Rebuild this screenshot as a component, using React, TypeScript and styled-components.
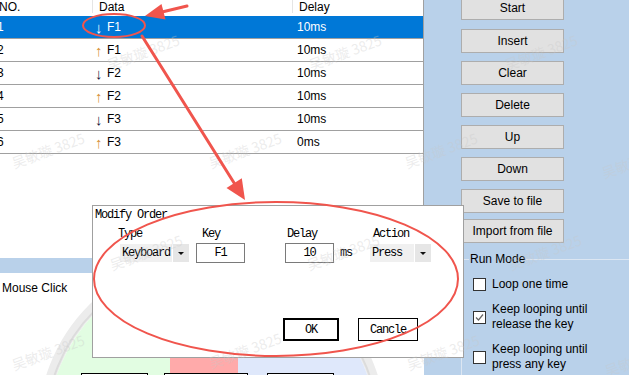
import React from "react";
import styled, { createGlobalStyle } from "styled-components";

const GlobalStyle = createGlobalStyle`
  html, body {
    margin: 0;
    padding: 0;
  }
  body {
    background: #fff;
    font-family: "Liberation Sans", Arial, sans-serif;
    font-size: 12px;
    color: #000;
  }
`;

const rows = [
  { no: 1, up: false, key: "F1", delay: "10ms" },
  { no: 2, up: true, key: "F1", delay: "10ms" },
  { no: 3, up: false, key: "F2", delay: "10ms" },
  { no: 4, up: true, key: "F2", delay: "10ms" },
  { no: 5, up: false, key: "F3", delay: "10ms" },
  { no: 6, up: true, key: "F3", delay: "0ms" },
];

const actions = ["Start", "Insert", "Clear", "Delete", "Up", "Down", "Save to file", "Import from file"];

const modes = [
  { label: "Loop one time", checked: false },
  { label: "Keep looping until release the key", checked: true },
  { label: "Keep looping until press any key", checked: false },
];

const marks = [
  [143, 52], [345, 52], [541, 52],
  [48, 150], [245, 150], [441, 150], [638, 160],
  [146, 252], [343, 252], [545, 252],
  [48, 352], [245, 350], [443, 352], [641, 358],
];

const dialogFont = `"Liberation Mono", "Courier New", monospace`;

const Page = styled.div`
  position: relative;
  width: 629px;
  height: 375px;
  overflow: hidden;
  display: flex;
`;

const LeftColumn = styled.div`
  width: 424px;
  display: flex;
  flex-direction: column;
`;

const ListPanel = styled.div`
  height: 258px;
  background: #fff;
  border-right: 1px solid #a0a0a0;
  box-sizing: border-box;
  overflow: hidden;
`;

const Table = styled.div`
  margin-left: -6px;
`;

const HeaderRow = styled.div`
  display: grid;
  grid-template-columns: 99px 200px 1fr;
  height: 16px;
  align-items: start;
`;

const HeaderCell = styled.div<{ $pad: number; $sep?: boolean }>`
  height: 13px;
  line-height: 15px;
  padding-left: ${(p) => p.$pad}px;
  border-right: ${(p) => (p.$sep ? "1px solid #e5e5e5" : "none")};
  white-space: nowrap;
`;

const BodyRow = styled.div<{ $selected?: boolean }>`
  display: grid;
  grid-template-columns: 99px 200px 1fr;
  align-items: center;
  height: 23px;
  box-sizing: border-box;
  border-bottom: 1px solid #a0a0a0;
  background: ${(p) => (p.$selected ? "#0078d7" : "#fff")};
  color: ${(p) => (p.$selected ? "#fff" : "#000")};
`;

const Cell = styled.div<{ $pad: number }>`
  padding-left: ${(p) => p.$pad}px;
  line-height: 15px;
  white-space: nowrap;
  display: flex;
  align-items: center;
`;

const Arrow = styled.span<{ $color: string }>`
  display: inline-block;
  width: 12px;
  font-size: 15px;
  line-height: 15px;
  color: ${(p) => p.$color};
`;

const BlueStrip = styled.div`
  height: 15px;
  background: #b9d1ea;
`;

const MousePanel = styled.div`
  flex: 1;
  background: #fff;
  padding-top: 8px;
  display: flex;
  flex-direction: column;
`;

const PanelTitle = styled.div`
  padding-left: 2px;
  line-height: 15px;
`;

const MouseArt = styled.svg`
  display: block;
`;

const RightColumn = styled.div`
  flex: 1;
  background: #b9d1ea;
  padding-left: 37px;
  display: flex;
  flex-direction: column;
`;

const ButtonStack = styled.div`
  margin-top: -4px;
  display: flex;
  flex-direction: column;
  gap: 8px;
`;

const SideButton = styled.div<{ $shift?: number }>`
  width: 103px;
  height: 24px;
  box-sizing: border-box;
  margin-top: ${(p) => p.$shift ?? 0}px;
  border: 1px solid #adadad;
  background: #e1e1e1;
  display: flex;
  align-items: center;
  justify-content: center;
  font-size: 12px;
  white-space: nowrap;
`;

const Group = styled.div`
  margin-top: 16px;
  width: 168px;
  flex: 1;
  border-top: 1px solid #dce6f2;
  border-left: 1px solid #dce6f2;
`;

const GroupLabel = styled.div`
  margin: -8px 0 0 7px;
  padding: 0 1px;
  width: fit-content;
  line-height: 15px;
  background: #b9d1ea;
`;

const ModeList = styled.div`
  margin-top: 10px;
  padding-left: 11px;
  display: flex;
  flex-direction: column;
  gap: 10px;
`;

const ModeRow = styled.div`
  display: flex;
  align-items: center;
  gap: 6px;
`;

const Box = styled.span`
  width: 13px;
  height: 13px;
  box-sizing: border-box;
  border: 1px solid #333;
  background: #fff;
  display: flex;
  align-items: center;
  justify-content: center;
  flex-shrink: 0;
`;

const ModeText = styled.span`
  max-width: 128px;
  line-height: 15px;
`;

const Dialog = styled.div`
  position: absolute;
  left: 92px;
  top: 205px;
  width: 372px;
  height: 153px;
  box-sizing: border-box;
  border: 1px solid #a0a0a0;
  background: #fff;
  display: flex;
  flex-direction: column;
  font-family: ${dialogFont};
  font-size: 12px;
  letter-spacing: -1.2px;
  color: #000;
  z-index: 2;
`;

const DialogTitle = styled.div`
  padding: 3px 0 0 2px;
  line-height: 12px;
`;

const FieldRow = styled.div`
  display: flex;
  margin-top: 7px;
  padding-left: 25px;
`;

const Field = styled.div<{ $w: number }>`
  width: ${(p) => p.$w}px;
  display: flex;
  flex-direction: column;
  gap: 3px;
`;

const FieldLabel = styled.div<{ $indent: number }>`
  padding-left: ${(p) => p.$indent}px;
  line-height: 12px;
`;

const Controls = styled.div<{ $indent?: number }>`
  display: flex;
  align-items: center;
  gap: 6px;
  padding-left: ${(p) => p.$indent ?? 0}px;
`;

const TextBox = styled.div`
  width: 49px;
  height: 20px;
  box-sizing: border-box;
  border: 1px solid #7a7a7a;
  display: flex;
  align-items: center;
  justify-content: center;
`;

const Select = styled.div<{ $w: number }>`
  width: ${(p) => p.$w}px;
  height: 18px;
  margin: 1px 0;
  display: flex;
  gap: 1px;
`;

const SelectText = styled.div`
  flex: 1;
  background: #f0f0f0;
  padding-left: 2px;
  display: flex;
  align-items: center;
`;

const SelectArrow = styled.div`
  width: 16px;
  background: #e6e6e6;
  display: flex;
  align-items: center;
  justify-content: center;
  &::after {
    content: "";
    border-left: 3px solid transparent;
    border-right: 3px solid transparent;
    border-top: 3px solid #111;
  }
`;

const DialogButtons = styled.div`
  display: flex;
  gap: 19px;
  margin-top: 55px;
  padding-left: 190px;
`;

const DialogButton = styled.div<{ $w: number; $default?: boolean }>`
  width: ${(p) => p.$w}px;
  height: 23px;
  box-sizing: border-box;
  border: ${(p) => (p.$default ? "2px" : "1px")} solid #000;
  display: flex;
  align-items: center;
  justify-content: center;
`;

const Watermark = styled.span<{ $x: number; $y: number }>`
  position: absolute;
  left: ${(p) => p.$x}px;
  top: ${(p) => p.$y}px;
  transform: translate(-50%, -50%) rotate(-20deg);
  font-family: "Noto Sans CJK SC", sans-serif;
  font-size: 14px;
  color: rgba(200, 200, 200, 0.35);
  white-space: nowrap;
  pointer-events: none;
  z-index: 3;
`;

const Annotations = styled.svg`
  position: absolute;
  left: 0;
  top: 0;
  pointer-events: none;
  z-index: 4;
`;

const Check = () => (
  <svg width="9" height="9" viewBox="0 0 9 9">
    <path d="M1 4.5 L3.5 7 L8 1.5" fill="none" stroke="#666" strokeWidth="1.2" />
  </svg>
);

const App: React.FC = () => {
  return (
    <>
      <GlobalStyle />
      <Page>
        <LeftColumn>
          <ListPanel>
            <Table>
              <HeaderRow>
                <HeaderCell $pad={5} $sep>NO.</HeaderCell>
                <HeaderCell $pad={6} $sep>Data</HeaderCell>
                <HeaderCell $pad={6}>Delay</HeaderCell>
              </HeaderRow>
              {rows.map((r) => (
                <BodyRow key={r.no} $selected={r.no === 1}>
                  <Cell $pad={3}>{r.no}</Cell>
                  <Cell $pad={2}>
                    <Arrow $color={r.no === 1 ? "#fff" : r.up ? "#d8923a" : "#1c1c3a"}>
                      {r.up ? "↑" : "↓"}
                    </Arrow>
                    {r.key}
                  </Cell>
                  <Cell $pad={4}>{r.delay}</Cell>
                </BodyRow>
              ))}
            </Table>
          </ListPanel>
          <BlueStrip />
          <MousePanel>
            <PanelTitle>Mouse Click</PanelTitle>
            <MouseArt width="424" height="79" viewBox="0 296 424 79">
              <defs>
                <clipPath id="inner">
                  <circle cx="212" cy="428" r="164" />
                </clipPath>
              </defs>
              <circle cx="212" cy="428" r="169" fill="none" stroke="#ececec" strokeWidth="10" />
              <circle cx="212" cy="428" r="166" fill="none" stroke="#dcdcdc" strokeWidth="2" />
              <g clipPath="url(#inner)">
                <rect x="40" y="250" width="130" height="200" fill="#e2fde2" />
                <rect x="170" y="250" width="68" height="200" fill="#ffaaaa" />
                <rect x="238" y="250" width="150" height="200" fill="#dfe8fb" />
              </g>
              <rect x="81.5" y="373.5" width="66" height="20" fill="#fff" stroke="#000" />
              <rect x="164.5" y="373.5" width="83" height="20" fill="#fff" stroke="#000" />
              <rect x="267.5" y="373.5" width="66" height="20" fill="#fff" stroke="#000" />
            </MouseArt>
          </MousePanel>
        </LeftColumn>

        <RightColumn>
          <ButtonStack>
            {actions.map((a, i) => (
              <SideButton key={a} $shift={i === 1 ? 1 : i === 7 ? -2 : 0}>
                {a}
              </SideButton>
            ))}
          </ButtonStack>
          <Group>
            <GroupLabel>Run Mode</GroupLabel>
            <ModeList>
              {modes.map((m) => (
                <ModeRow key={m.label}>
                  <Box>{m.checked && <Check />}</Box>
                  <ModeText>{m.label}</ModeText>
                </ModeRow>
              ))}
            </ModeList>
          </Group>
        </RightColumn>

        <Dialog>
          <DialogTitle>Modify Order</DialogTitle>
          <FieldRow>
            <Field $w={78}>
              <FieldLabel $indent={0}>Type</FieldLabel>
              <Controls $indent={2}>
                <Select $w={69}>
                  <SelectText>Keyboard</SelectText>
                  <SelectArrow />
                </Select>
              </Controls>
            </Field>
            <Field $w={89}>
              <FieldLabel $indent={6}>Key</FieldLabel>
              <Controls>
                <TextBox>F1</TextBox>
              </Controls>
            </Field>
            <Field $w={85}>
              <FieldLabel $indent={2}>Delay</FieldLabel>
              <Controls>
                <TextBox>10</TextBox>
                <span>ms</span>
              </Controls>
            </Field>
            <Field $w={61}>
              <FieldLabel $indent={3}>Action</FieldLabel>
              <Controls>
                <Select $w={61}>
                  <SelectText>Press</SelectText>
                  <SelectArrow />
                </Select>
              </Controls>
            </Field>
          </FieldRow>
          <DialogButtons>
            <DialogButton $w={56} $default>OK</DialogButton>
            <DialogButton $w={60}>Cancle</DialogButton>
          </DialogButtons>
        </Dialog>

        {marks.map(([x, y], i) => (
          <Watermark key={i} $x={x} $y={y}>
            吴敏璇 3825
          </Watermark>
        ))}

        <Annotations width="629" height="375" viewBox="0 0 629 375">
          <g fill="none" stroke="#f0554d" strokeWidth="2">
            <ellipse cx="114" cy="25.5" rx="31" ry="11.5" />
            <ellipse cx="276" cy="279" rx="182" ry="77" />
          </g>
          <g stroke="#f0554d" strokeWidth="3" strokeLinecap="round">
            <line x1="187" y1="6" x2="162" y2="12" />
            <line x1="142" y1="36" x2="236" y2="186" />
          </g>
          <g fill="#f0554d">
            <polygon points="145,16 165.5,19.5 161.5,4" />
            <polygon points="245,200 226.5,188 241.8,178.3" />
          </g>
        </Annotations>
      </Page>
    </>
  );
};

export default App;
